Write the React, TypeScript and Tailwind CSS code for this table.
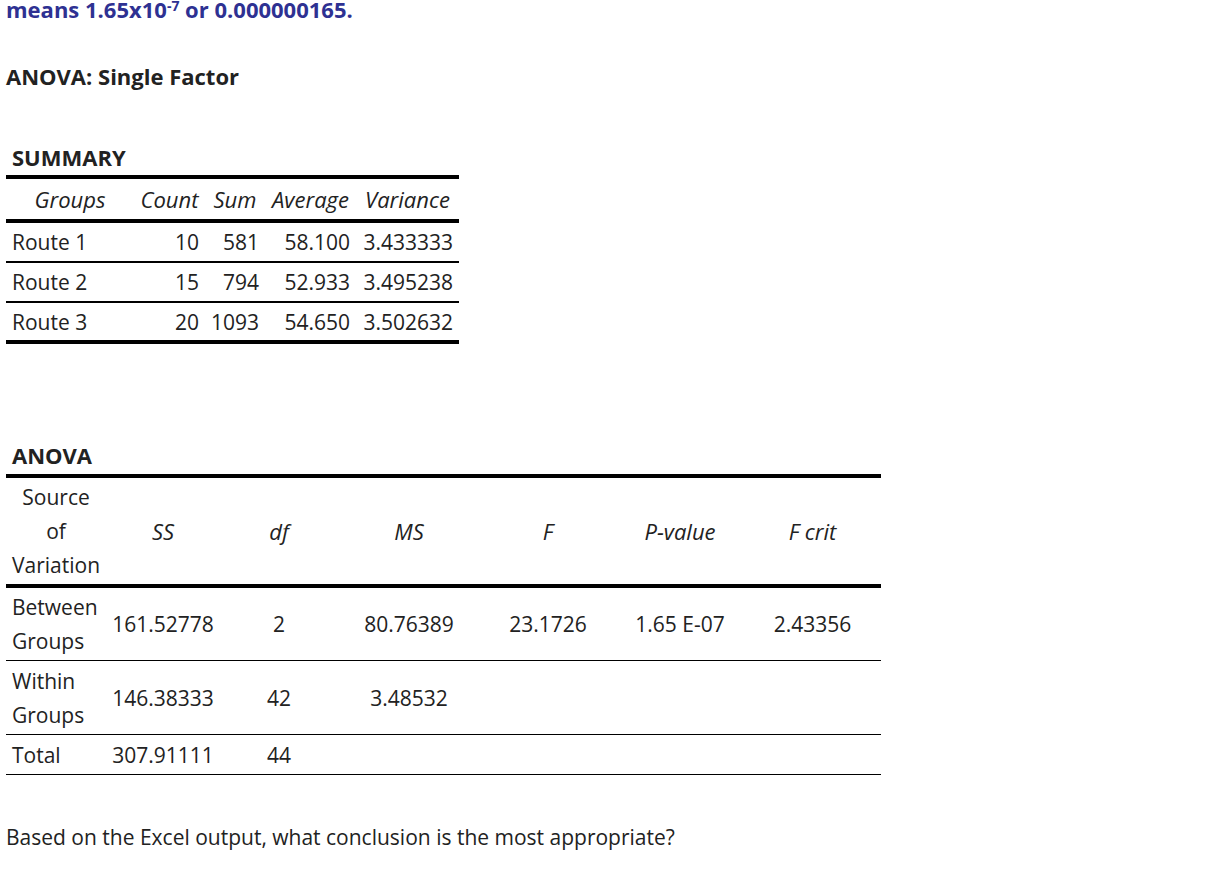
import React from 'react';

const summaryRows = [
  { group: 'Route 1', count: '10', sum: '581', avg: '58.100', variance: '3.433333' },
  { group: 'Route 2', count: '15', sum: '794', avg: '52.933', variance: '3.495238' },
  { group: 'Route 3', count: '20', sum: '1093', avg: '54.650', variance: '3.502632' },
];

// column widths for the ANOVA table
const anovaCols = ['w-[100px]', 'w-[114px]', 'w-[118px]', 'w-[142px]', 'w-[136px]', 'w-[128px]', 'w-[137px]'];

const anovaRows = [
  { source: ['Between', 'Groups'], values: ['161.52778', '2', '80.76389', '23.1726', '1.65 E-07', '2.43356'], h: 'h-[73px]' },
  { source: ['Within', 'Groups'], values: ['146.38333', '42', '3.48532', '', '', ''], h: 'h-[74px]' },
  { source: ['Total'], values: ['307.91111', '44', '', '', '', ''], h: 'h-[40px]' },
];

export default function App() {
  return (
    <div className="min-h-[882px] w-[1228px] overflow-hidden bg-white px-[6px] font-['Open_Sans',sans-serif] text-[21px] leading-[34px] text-[#222]">
      <p className="-mt-[8px] text-[22px] font-bold text-[#2e3192]">
        means 1.65x10<sup className="text-[14px]">-7</sup> or 0.000000165.
      </p>

      <p className="mt-[33px] text-[22px] font-bold">ANOVA: Single Factor</p>

      {/* Summary table */}
      <div className="mt-[47px] w-[453px]">
        <div className="pl-[6px] text-[22px] font-bold">SUMMARY</div>
        <div className="mt-[1px] border-t-4 border-black">
          <div className="flex h-[44px] items-center border-b-4 border-black text-[22px] italic">
            <div className="w-[128px] text-center">Groups</div>
            <div className="w-[71px] text-center">Count</div>
            <div className="w-[60px] text-center">Sum</div>
            <div className="w-[91px] text-center">Average</div>
            <div className="w-[103px] text-center">Variance</div>
          </div>
          {summaryRows.map((r, i) => (
            <div
              key={r.group}
              className={`flex items-center ${i === summaryRows.length - 1 ? 'h-[41px] border-b-4' : 'h-[40px] border-b-2'} border-black`}
            >
              <div className="w-[128px] pl-[6px]">{r.group}</div>
              <div className="w-[71px] pr-[6px] text-right">{r.count}</div>
              <div className="w-[60px] pr-[6px] text-right">{r.sum}</div>
              <div className="w-[91px] pr-[6px] text-right">{r.avg}</div>
              <div className="w-[103px] pr-[6px] text-right">{r.variance}</div>
            </div>
          ))}
        </div>
      </div>

      {/* ANOVA table */}
      <div className="mt-[94px] w-[875px]">
        <div className="pl-[6px] text-[22px] font-bold">ANOVA</div>
        <div className="mt-[2px] border-t-4 border-black">
          <div className="flex h-[110px] items-center border-b-4 border-black">
            <div className={`${anovaCols[0]} text-center`}>
              Source
              <br />
              of
              <br />
              Variation
            </div>
            {['SS', 'df', 'MS', 'F', 'P-value', 'F crit'].map((h, i) => (
              <div key={h} className={`${anovaCols[i + 1]} text-center text-[22px] italic`}>
                {h}
              </div>
            ))}
          </div>
          {anovaRows.map((r) => (
            <div key={r.source[0]} className={`flex items-center border-b border-black ${r.h}`}>
              <div className={`${anovaCols[0]} pl-[6px]`}>
                {r.source.map((s) => (
                  <div key={s}>{s}</div>
                ))}
              </div>
              {r.values.map((v, i) => (
                <div key={i} className={`${anovaCols[i + 1]} text-center`}>
                  {v}
                </div>
              ))}
            </div>
          ))}
        </div>
      </div>

      <p className="mt-[45px]">Based on the Excel output, what conclusion is the most appropriate?</p>
    </div>
  );
}
